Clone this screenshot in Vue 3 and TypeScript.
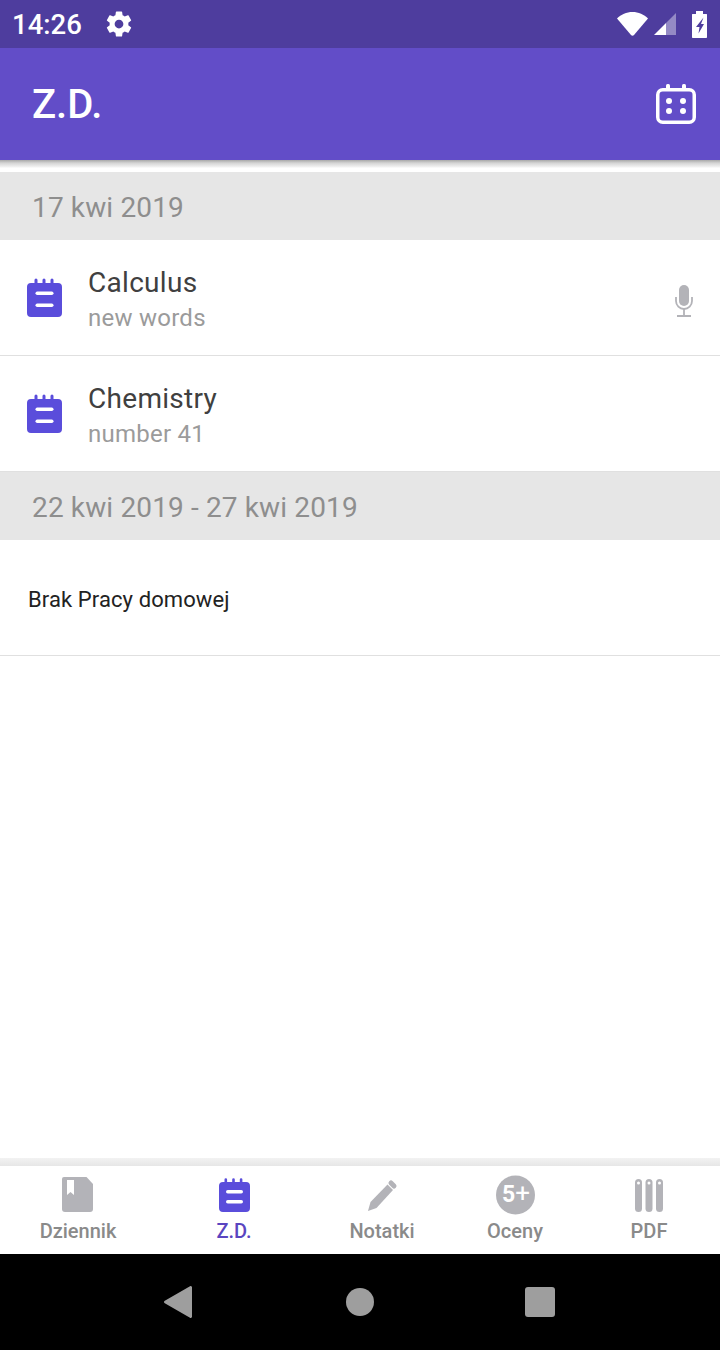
<template>
  <div class="phone">
    <div class="status-bar">
      <span class="clock">14:26</span>
      <svg class="gear" viewBox="0 0 24 24" width="30" height="30">
        <path fill="#fff" d="M19.43 12.98c.04-.32.07-.64.07-.98s-.03-.66-.07-.98l2.11-1.65c.19-.15.24-.42.12-.64l-2-3.46c-.12-.22-.39-.3-.61-.22l-2.49 1c-.52-.4-1.08-.73-1.69-.98l-.38-2.65C14.46 2.18 14.25 2 14 2h-4c-.25 0-.46.18-.49.42l-.38 2.65c-.61.25-1.17.59-1.69.98l-2.49-1c-.23-.09-.49 0-.61.22l-2 3.46c-.13.22-.07.49.12.64l2.11 1.65c-.04.32-.07.65-.07.98s.03.66.07.98l-2.11 1.65c-.19.15-.24.42-.12.64l2 3.46c.12.22.39.3.61.22l2.49-1c.52.4 1.08.73 1.69.98l.38 2.65c.03.24.24.42.49.42h4c.25 0 .46-.18.49-.42l.38-2.65c.61-.25 1.17-.59 1.69-.98l2.49 1c.23.09.49 0 .61-.22l2-3.46c.12-.22.07-.49-.12-.64l-2.11-1.65zM12 15.5c-1.93 0-3.5-1.57-3.5-3.5s1.57-3.5 3.5-3.5 3.5 1.57 3.5 3.5-1.57 3.5-3.5 3.5z" />
      </svg>
      <div class="status-right">
        <svg class="wifi" viewBox="0 0 31 24" width="31" height="24">
          <path fill="#fff" d="M0 6.500C4 2.500 9.500 0 15.500 0S27 2.500 31 6.500L17 23c-.8.9-2.200.9-3 0z" />
        </svg>
        <svg class="signal" viewBox="0 0 22 22" width="22" height="22">
          <path fill="#fff" fill-opacity="0.4" d="M12 10L22 0v22H12z" />
          <path fill="#fff" d="M0 22l12-12v12z" />
        </svg>
        <svg class="battery" viewBox="0 0 15 27" width="15" height="27">
          <path fill="#fff" d="M4 0h7v3h3.500c.3 0 .500.200.500.500V26c0 .6-.4 1-1 1H1c-.6 0-1-.4-1-1V3.500C0 3.200.200 3 .500 3H4z" />
          <path fill="#4e3d9e" d="M11.500 6.500L4 16h3.500L6.500 22.500 12 13H9z" />
        </svg>
      </div>
    </div>

    <header class="app-bar">
      <h1 class="title">Z.D.</h1>
      <svg class="calendar" viewBox="0 0 40 40" width="40" height="40">
        <rect x="1.750" y="5.750" width="36.500" height="32.500" rx="5" fill="none" stroke="#fff" stroke-width="3.500" />
        <rect x="10" y="0" width="4" height="6" rx="1.500" fill="#fff" />
        <rect x="26" y="0" width="4" height="6" rx="1.500" fill="#fff" />
        <circle cx="13" cy="17" r="3" fill="#fff" />
        <circle cx="27" cy="17" r="3" fill="#fff" />
        <circle cx="13" cy="27" r="3" fill="#fff" />
        <circle cx="27" cy="27" r="3" fill="#fff" />
      </svg>
    </header>
    <div class="bar-shadow"></div>

    <main class="content">
      <template v-for="group in groups" :key="group.range">
        <div class="group-head">{{ group.range }}</div>
        <div v-for="item in group.items" :key="item.subject" class="row">
          <svg class="note" viewBox="0 0 36 40" width="36" height="40">
            <path fill="#5a4ddb" d="M5 5h3.500V2a1.500 1.500 0 0 1 3 0v3h5V2a1.500 1.500 0 0 1 3 0v3h5V2a1.500 1.500 0 0 1 3 0v3H32a4 4 0 0 1 4 4v26a4 4 0 0 1-4 4H5a4 4 0 0 1-4-4V9a4 4 0 0 1 4-4z" />
            <rect x="9.500" y="13.500" width="18" height="3.500" rx="1.750" fill="#fff" />
            <rect x="9.500" y="25.500" width="18" height="3.500" rx="1.750" fill="#fff" />
          </svg>
          <div class="row-text">
            <div class="subject">{{ item.subject }}</div>
            <div class="detail">{{ item.detail }}</div>
          </div>
          <svg v-if="item.audio" class="mic" viewBox="0 0 18 32" width="18" height="32">
            <rect x="4" y="0" width="10" height="21" rx="5" fill="#b3b3b8" />
            <path d="M1 12v4a8 8 0 0 0 16 0v-4" fill="none" stroke="#b3b3b8" stroke-width="1.800" />
            <path d="M9 24v7M2 31h14" fill="none" stroke="#b3b3b8" stroke-width="1.800" />
          </svg>
        </div>
        <div v-if="!group.items.length" class="row empty">Brak Pracy domowej</div>
      </template>
    </main>

    <div class="tab-shadow"></div>
    <nav class="tabs">
      <div v-for="tab in tabs" :key="tab.label" class="tab" :class="{ active: tab.active }">
        <svg viewBox="0 0 36 36" width="36" height="36" class="tab-icon">
          <template v-if="tab.icon === 'book'">
            <path fill="#b3b3b8" d="M4 1h22.500L33 8v25a3 3 0 0 1-3 3H5a3 3 0 0 1-3-3V3a2 2 0 0 1 2-2z" />
            <path fill="#fff" d="M7 4h7v15l-3.500-3L7 19z" />
          </template>
          <template v-else-if="tab.icon === 'note'">
            <path fill="#5a4ddb" d="M7 6h1.500V3.500a1.300 1.300 0 0 1 2.600 0V6h5.100V3.500a1.300 1.300 0 0 1 2.600 0V6h5V3.500a1.300 1.300 0 0 1 2.600 0V6H30a4 4 0 0 1 4 4v22a4 4 0 0 1-4 4H7a4 4 0 0 1-4-4V10a4 4 0 0 1 4-4z" />
            <rect x="10" y="14" width="17" height="3.500" rx="1.750" fill="#fff" />
            <rect x="10" y="24" width="17" height="3.500" rx="1.750" fill="#fff" />
          </template>
          <template v-else-if="tab.icon === 'pencil'">
            <path fill="#b3b3b8" d="M4 35l2.500-9L23.500 8.500l5.500 5.500L12.500 32z" />
            <path d="M27 7l3 3" fill="none" stroke="#b3b3b8" stroke-width="5" stroke-linecap="round" />
          </template>
          <template v-else-if="tab.icon === 'grade'">
            <circle cx="18.500" cy="19" r="19.500" fill="#b3b3b8" />
            <text x="5" y="26" class="grade-text">5<tspan class="grade-plus">+</tspan></text>
          </template>
          <template v-else>
            <rect x="4" y="3" width="7" height="33" rx="3.500" fill="#b3b3b8" />
            <rect x="14.500" y="3" width="7" height="33" rx="3.500" fill="#b3b3b8" />
            <rect x="25" y="3" width="7" height="33" rx="3.500" fill="#b3b3b8" />
            <circle cx="7.500" cy="7" r="1.500" fill="#fff" />
            <circle cx="18" cy="7" r="1.500" fill="#fff" />
            <circle cx="28.500" cy="7" r="1.500" fill="#fff" />
          </template>
        </svg>
        <span class="tab-label">{{ tab.label }}</span>
      </div>
    </nav>

    <footer class="nav-bar">
      <svg viewBox="0 0 28 32" width="28" height="32"><path fill="#9e9e9e" d="M.8 17.200a1.300 1.300 0 0 1 0-2.400L26 .2A1.300 1.300 0 0 1 28 1.400v29.200a1.300 1.300 0 0 1-2 1.200z" /></svg>
      <span class="home"></span>
      <span class="recent"></span>
    </footer>
  </div>
</template>

<script setup lang="ts">
interface Homework {
  subject: string
  detail: string
  audio?: boolean
}

const groups: { range: string; items: Homework[] }[] = [
  {
    range: '17 kwi 2019',
    items: [
      { subject: 'Calculus', detail: 'new words', audio: true },
      { subject: 'Chemistry', detail: 'number 41' },
    ],
  },
  { range: '22 kwi 2019 - 27 kwi 2019', items: [] },
]

const tabs = [
  { label: 'Dziennik', icon: 'book' },
  { label: 'Z.D.', icon: 'note', active: true },
  { label: 'Notatki', icon: 'pencil' },
  { label: 'Oceny', icon: 'grade' },
  { label: 'PDF', icon: 'bars' },
]
</script>

<style>
body {
  background: #fff;
}
</style>

<style scoped>
.phone {
  display: flex;
  flex-direction: column;
  width: 720px;
  height: 1350px;
  overflow: hidden;
  font-family: Roboto, 'Noto Sans', sans-serif;
  background: #fff;
}

.status-bar {
  display: flex;
  align-items: center;
  flex: none;
  height: 48px;
  padding: 0 13px 0 12px;
  color: #fff;
  background: #4e3d9e;
}

.clock {
  width: 71px;
  font-size: 27.500px;
  font-weight: 500;
}

.gear {
  margin-left: 21px;
}

.status-right {
  display: flex;
  align-items: center;
  margin-left: auto;
}

.signal {
  margin-left: 6px;
}

.battery {
  margin-left: 16px;
}

.app-bar {
  display: flex;
  align-items: center;
  justify-content: space-between;
  flex: none;
  height: 112px;
  padding: 0 24px 0 32px;
  background: #624dc8;
}

.title {
  margin: 0;
  font-size: 40px;
  font-weight: 500;
  color: #fff;
}

.bar-shadow {
  flex: none;
  height: 12px;
  background: linear-gradient(#a8a8a8, #d4d4d4 3px, #f2f2f2 7px, #fff 8px);
}

.content {
  flex: 1;
}

.group-head {
  display: flex;
  align-items: center;
  height: 68px;
  box-sizing: border-box;
  padding: 3px 0 0 32px;
  font-size: 28px;
  letter-spacing: 0.14px;
  color: #8e8e8e;
  background: #e6e6e6;
}

.row {
  display: flex;
  align-items: center;
  height: 116px;
  box-sizing: border-box;
  padding: 0 27px 0 26px;
  border-bottom: 1px solid #e0e0e0;
}

.note {
  flex: none;
}

.mic {
  margin-top: 6px;
}

.row-text {
  flex: 1;
  margin-left: 26px;
  padding-top: 5px;
}

.subject {
  font-size: 28px;
  line-height: 36px;
  letter-spacing: 0.3px;
  color: #404040;
}

.detail {
  font-size: 24px;
  line-height: 35px;
  letter-spacing: 0.25px;
  color: #9b9b9b;
}

.empty {
  padding: 3px 0 0 28px;
  font-size: 22px;
  letter-spacing: 0.1px;
  color: #222;
}

.tab-shadow {
  flex: none;
  height: 8px;
  background: linear-gradient(#f2f2f2, #e6e6e6);
}

.tabs {
  display: grid;
  flex: none;
  grid-template-columns: 156px 156px 140px 126px 142px;
  height: 88px;
  background: #fff;
}

.tab {
  display: flex;
  flex-direction: column;
  align-items: center;
  padding-top: 10px;
}

.tab-icon {
  overflow: visible;
}

.tab-label {
  margin-top: 6px;
  font-size: 20px;
  font-weight: 500;
  line-height: 26px;
  color: #8a8a8a;
}

.tab.active .tab-label {
  color: #5a45c0;
}

.grade-text {
  font-size: 23px;
  font-weight: 700;
  fill: #fff;
}

.grade-plus {
  font-size: 26px;
  font-weight: 400;
}

.nav-bar {
  position: relative;
  flex: none;
  height: 96px;
  background: #000;
}

.nav-bar svg {
  position: absolute;
  top: 32px;
  left: 164px;
}

.home {
  position: absolute;
  top: 34px;
  left: 346px;
  width: 28px;
  height: 28px;
  border-radius: 50%;
  background: #9e9e9e;
}

.recent {
  position: absolute;
  top: 33px;
  left: 525px;
  width: 30px;
  height: 30px;
  border-radius: 3px;
  background: #9e9e9e;
}
</style>
